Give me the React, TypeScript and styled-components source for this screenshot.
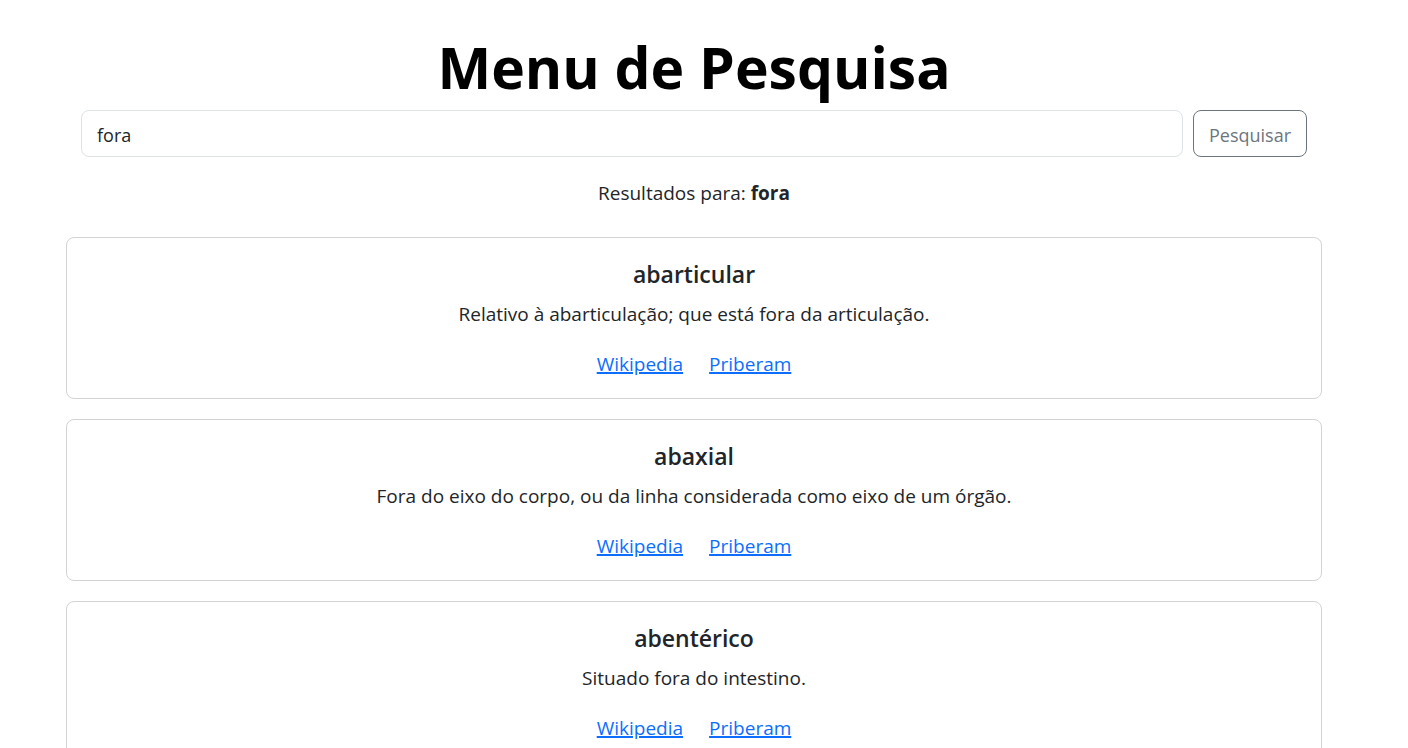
import React, { useState } from "react";
import styled, { createGlobalStyle } from "styled-components";

const GlobalStyle = createGlobalStyle`
  *, *::before, *::after { box-sizing: border-box; }
  body {
    margin: 0;
    background: #fff;
    color: #212529;
    font-family: "Segoe UI", "Open Sans", "Noto Sans", sans-serif;
    font-size: 19px;
    line-height: 30px;
  }
`;

const Page = styled.main`
  padding: 30px 86px 0 66px;
  text-align: center;
`;

const Title = styled.h1`
  margin: 0 0 6px;
  color: #000;
  font-size: 57px;
  font-weight: 700;
  line-height: 74px;
`;

const SearchForm = styled.form`
  display: flex;
  gap: 10px;
  padding: 0 15px;
`;

const SearchInput = styled.input`
  flex: 1;
  min-width: 0;
  padding: 9px 15px 6px;
  border: 1px solid #dee2e6;
  border-radius: 8px;
  background: #fff;
  color: #212529;
  font: inherit;
  font-size: 18px;
`;

const SearchButton = styled.button`
  padding: 9px 15px 6px;
  border: 1px solid #6c757d;
  border-radius: 8px;
  background: transparent;
  color: #6c757d;
  font: inherit;
  font-size: 18px;
  cursor: pointer;
`;

const Summary = styled.p`
  margin: 21px 0 29px;
`;

const Results = styled.section`
  display: flex;
  flex-direction: column;
  gap: 20px;
`;

const Card = styled.article`
  padding: 21px 20px 19px;
  border: 1px solid #d2d3d4;
  border-radius: 8px;
`;

const Word = styled.h5`
  margin: 0 0 10px;
  font-size: 23px;
  font-weight: 600;
  line-height: 30px;
`;

const Definition = styled.p`
  margin: 0 0 20px;
`;

const Links = styled.div`
  display: flex;
  justify-content: center;
  gap: 26px;
`;

const SourceLink = styled.a`
  color: #0d6efd;
  text-decoration: underline;
  text-decoration-thickness: 2px;
`;

const entries = [
  { word: "abarticular", definition: "Relativo à abarticulação; que está fora da articulação." },
  { word: "abaxial", definition: "Fora do eixo do corpo, ou da linha considerada como eixo de um órgão." },
  { word: "abentérico", definition: "Situado fora do intestino." },
];

export default function App() {
  const [query, setQuery] = useState("fora");
  const [term, setTerm] = useState("fora");

  return (
    <>
      <GlobalStyle />
      <Page>
        <Title>Menu de Pesquisa</Title>
        <SearchForm
          role="search"
          onSubmit={(e: React.FormEvent) => {
            e.preventDefault();
            setTerm(query);
          }}
        >
          <SearchInput
            type="text"
            aria-label="Pesquisar"
            value={query}
            onChange={(e: React.ChangeEvent<HTMLInputElement>) => setQuery(e.target.value)}
          />
          <SearchButton type="submit">Pesquisar</SearchButton>
        </SearchForm>
        <Summary>
          Resultados para: <strong>{term}</strong>
        </Summary>
        <Results>
          {entries.map(({ word, definition }) => (
            <Card key={word}>
              <Word>{word}</Word>
              <Definition>{definition}</Definition>
              <Links>
                <SourceLink href={`https://pt.wikipedia.org/wiki/${word}`}>Wikipedia</SourceLink>
                <SourceLink href={`https://dicionario.priberam.org/${word}`}>Priberam</SourceLink>
              </Links>
            </Card>
          ))}
        </Results>
      </Page>
    </>
  );
}
